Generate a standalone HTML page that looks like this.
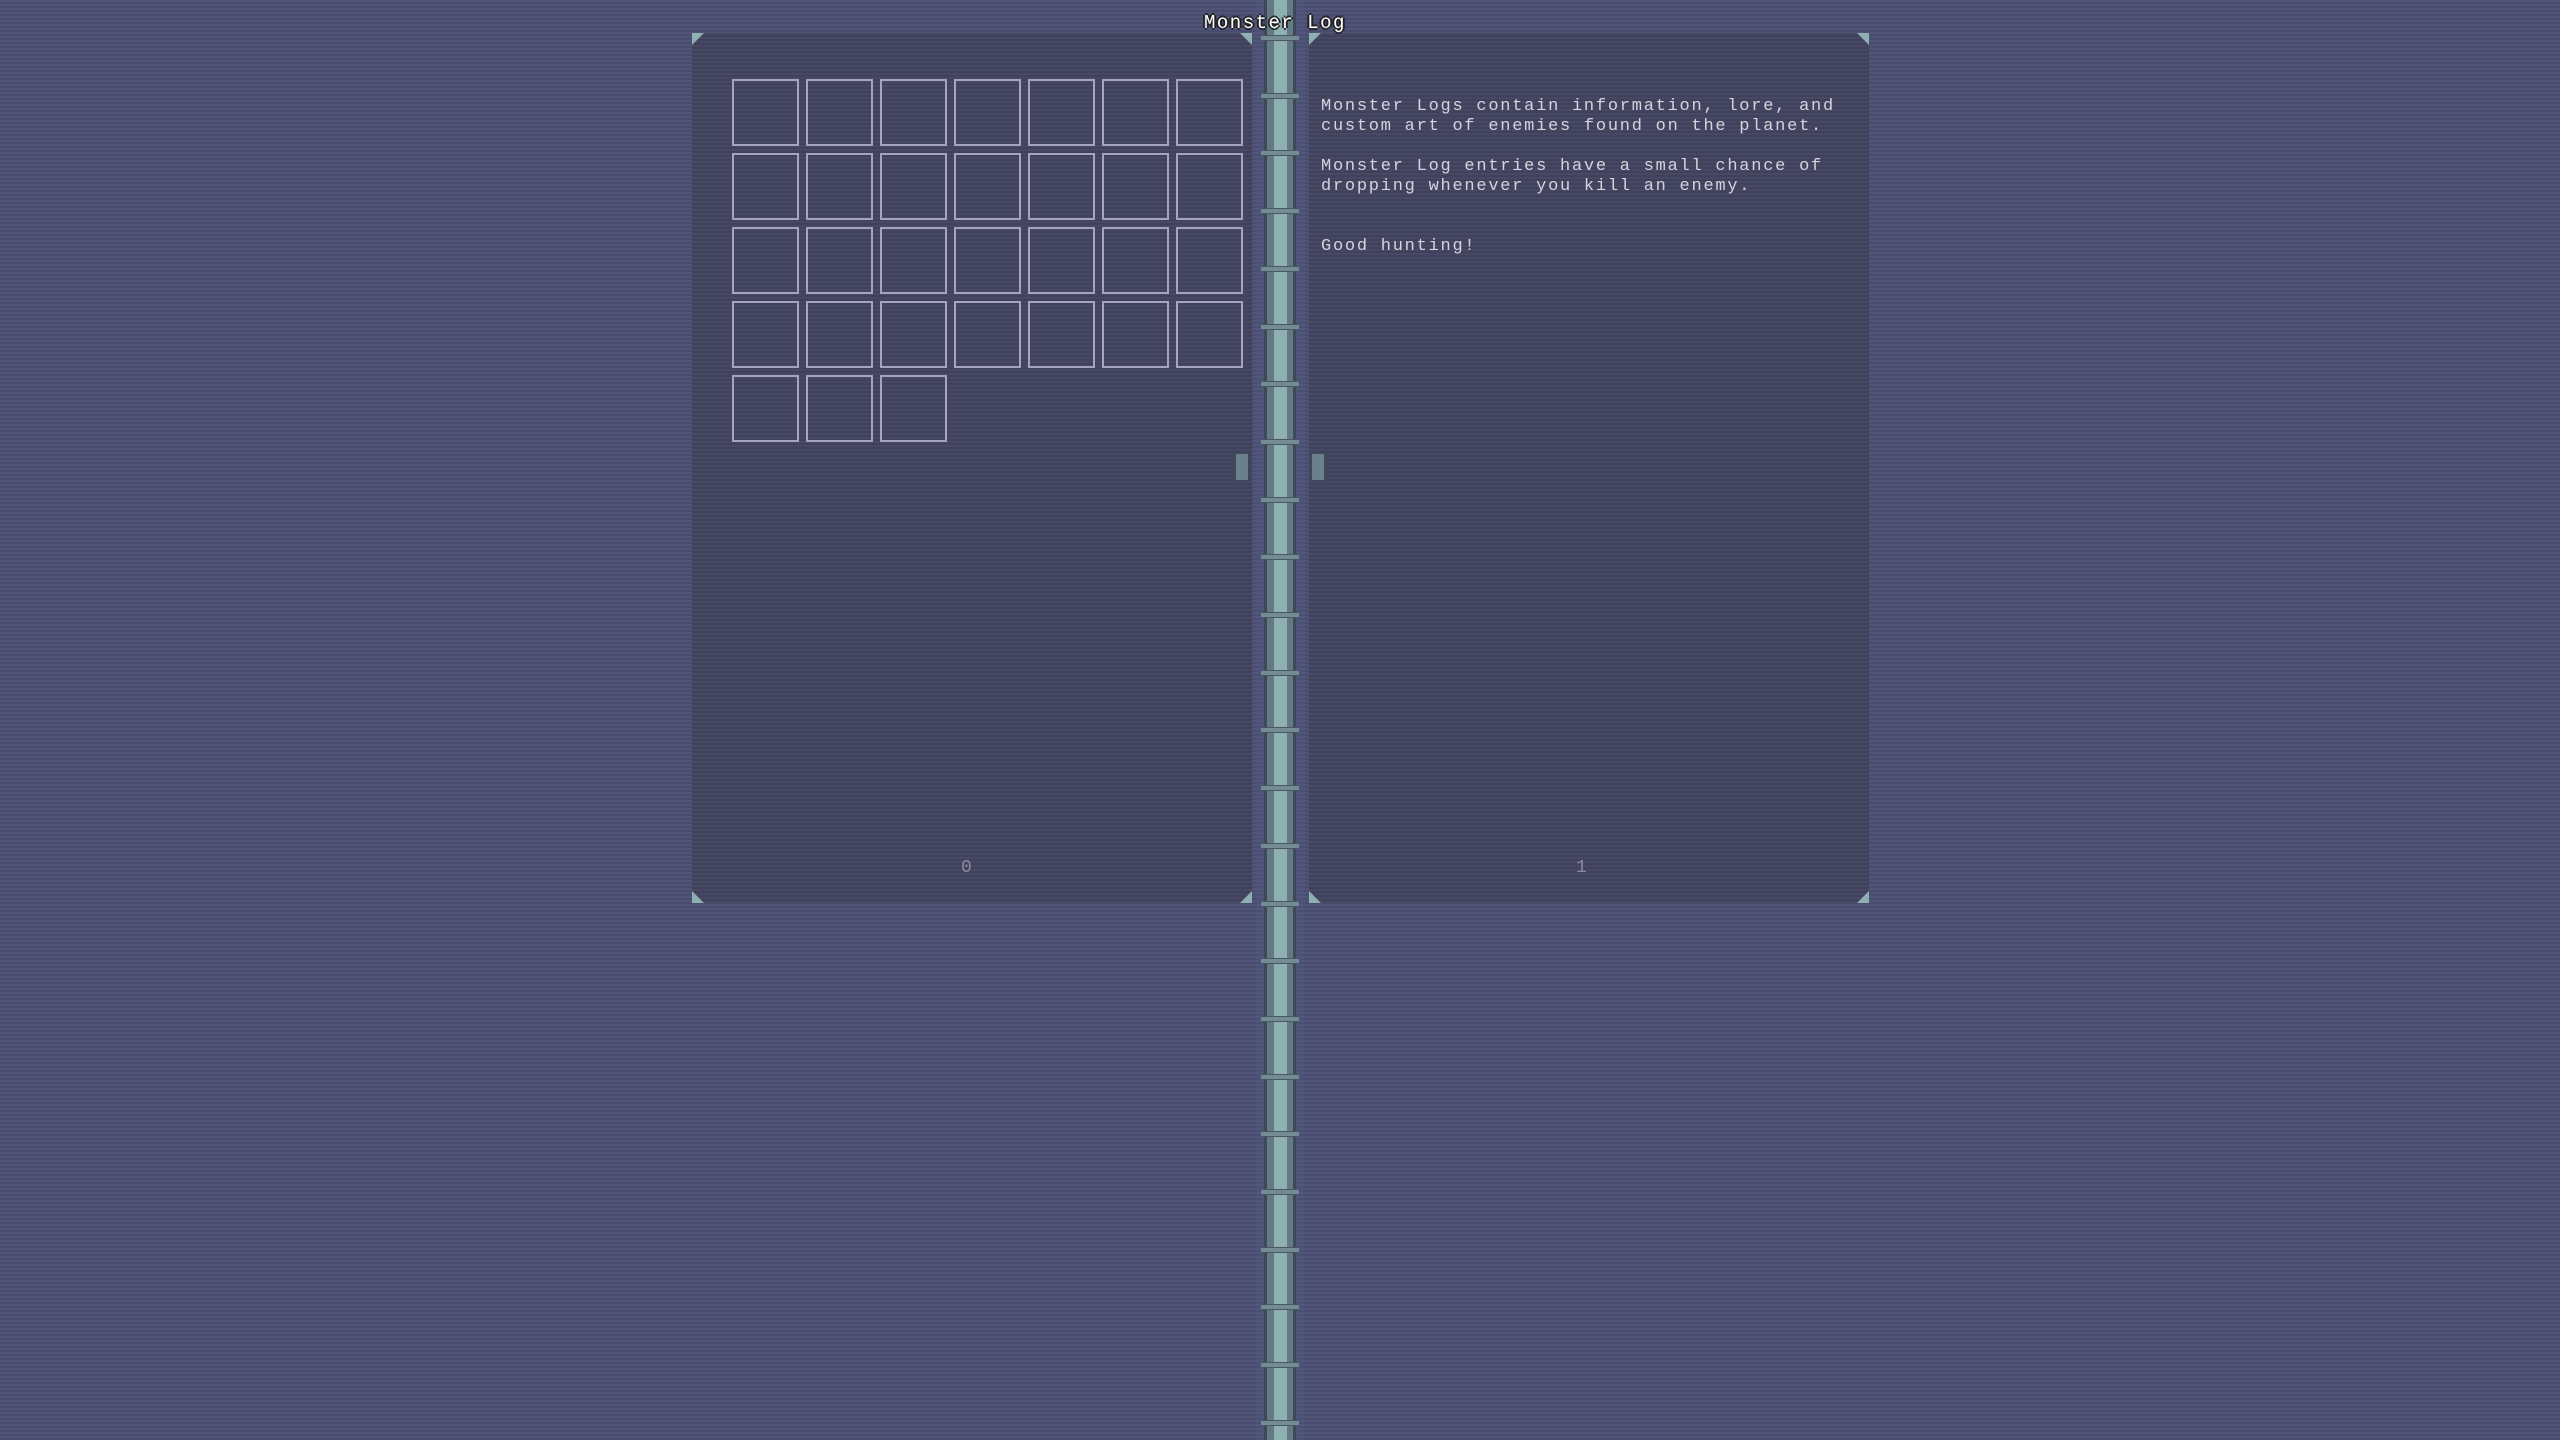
<!DOCTYPE html>
<html><head><meta charset="utf-8"><style>
html,body{margin:0;padding:0;width:2560px;height:1440px;overflow:hidden}
body{background:#4b4f72;background-image:repeating-linear-gradient(180deg,rgba(255,255,255,0.03) 0 2px,rgba(0,0,0,0.04) 2px 4px);position:relative;font-family:"Liberation Mono",monospace}
.panel{position:absolute;top:33px;width:560px;height:870px;background:#424460;background-image:repeating-linear-gradient(180deg,rgba(255,255,255,0.025) 0 2px,rgba(0,0,0,0.04) 2px 4px)}
.cell{position:absolute;width:63px;height:63px;border:2px solid #a4a5bc}
.txt{position:absolute;left:1321px;color:#d4d4de;font-size:17px;letter-spacing:1.75px;line-height:20px;white-space:pre}
.band{position:absolute;left:1255px;width:50px;top:0;height:1440px;background:rgba(90,100,150,0.18)}
.pipe{position:absolute;left:1264px;width:32px;top:0;height:1440px;background:linear-gradient(90deg,#3e4858 0 3px,#627a85 3px 10px,#8fb0b2 10px 23px,#627a85 23px 29px,#3e4858 29px)}
.joint{position:absolute;left:1261px;width:38px;height:6px;background:linear-gradient(180deg,#4a5663 0 1px,#728c94 1px 5px,#4a5663 5px)}
.num{position:absolute;top:858px;color:#8a8b9e;font-size:18px}
.corner{position:absolute;width:0;height:0}
.knob{position:absolute;top:452px;width:12px;height:26px;background:#6a808c;border:2px solid #3e4858}
</style></head><body>
<div class="panel" style="left:692px"></div>
<div class="panel" style="left:1309px"></div>
<div class="band"></div>
<div class="pipe"></div>
<div id="joints"></div>
<script>
var j=document.getElementById('joints'),h='';
for(var y=35;y<1440;y+=57.7){h+='<div class="joint" style="top:'+Math.round(y)+'px"></div>';}
j.innerHTML=h;
</script>
<div class="corner" style="left:692px;top:33px;border-top:12px solid #8fb0b2;border-right:12px solid transparent"></div>
<div class="corner" style="left:1240px;top:33px;border-top:12px solid #8fb0b2;border-left:12px solid transparent"></div>
<div class="corner" style="left:1309px;top:33px;border-top:12px solid #8fb0b2;border-right:12px solid transparent"></div>
<div class="corner" style="left:1857px;top:33px;border-top:12px solid #8fb0b2;border-left:12px solid transparent"></div>
<div class="corner" style="left:692px;top:891px;border-bottom:12px solid #8fb0b2;border-right:12px solid transparent"></div>
<div class="corner" style="left:1240px;top:891px;border-bottom:12px solid #8fb0b2;border-left:12px solid transparent"></div>
<div class="corner" style="left:1309px;top:891px;border-bottom:12px solid #8fb0b2;border-right:12px solid transparent"></div>
<div class="corner" style="left:1857px;top:891px;border-bottom:12px solid #8fb0b2;border-left:12px solid transparent"></div>
<div class="knob" style="left:1234px"></div>
<div class="knob" style="left:1310px"></div>
<div id="grid"></div>
<script>
var g=document.getElementById('grid'),s='';
for(var i=0;i<31;i++){var r=Math.floor(i/7),c=i%7;s+='<div class="cell" style="left:'+(732+c*74)+'px;top:'+(79+r*74)+'px"></div>';}
g.innerHTML=s;
</script>
<div style="position:absolute;left:1204px;top:12px;font-size:19px;color:#fff;letter-spacing:1.5px;font-family:'Liberation Mono',monospace;text-shadow:-2px 0 #222,2px 0 #222,0 -2px #222,0 2px #222">Monster Log</div>
<div class="txt" style="top:97px">Monster Logs contain information, lore, and
custom art of enemies found on the planet.</div>
<div class="txt" style="top:157px">Monster Log entries have a small chance of
dropping whenever you kill an enemy.</div>
<div class="txt" style="top:237px">Good hunting!</div>
<div class="num" style="left:961px">0</div>
<div class="num" style="left:1576px">1</div>
</body></html>
